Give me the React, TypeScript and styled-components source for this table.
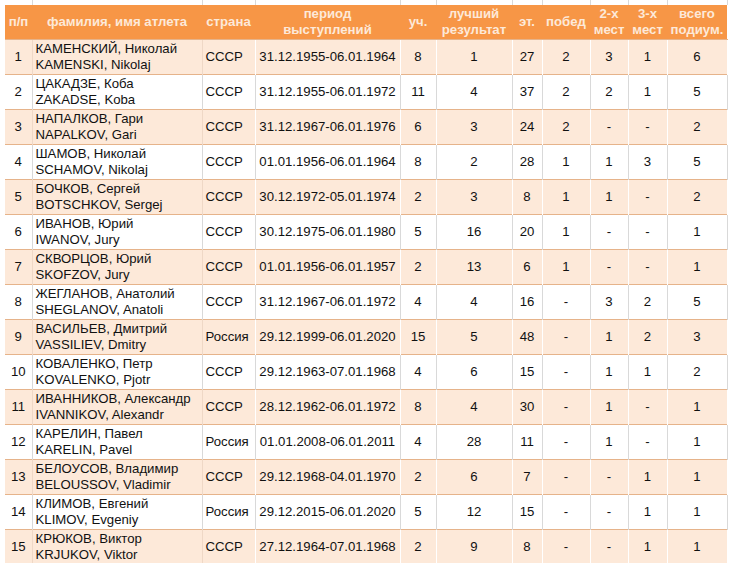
import styled, { createGlobalStyle } from 'styled-components';

const GlobalStyle = createGlobalStyle`
    html, body {
        margin: 0;
        padding: 0;
        background: #ffffff;
    }
    body {
        font-family: 'Liberation Sans', Arial, sans-serif;
    }
`;

const HEADER_COLOR = '#F79646';
const HEADER_TEXT = '#FDE9D9';
const PEACH = '#FDE9D9';
const ROW_LINE = '#E6B38A';
const GRID = '#D9D9D9';

const Page = styled.div`
    width: 730px;
    height: 563px;
    overflow: hidden;
    padding-left: 5px;
    box-sizing: border-box;
    border-left: 1px solid ${GRID};
    margin-left: -1px;
`;

const Table = styled.table`
    border-collapse: collapse;
    table-layout: fixed;
    width: 722px;
    font-size: 13.2px;
    color: #111111;
`;

const Strip = styled.tr`
    height: 5px;
    & td {
        padding: 0;
        border-right: 1px solid ${GRID};
        background: #ffffff;
    }
`;

const HeadRow = styled.tr`
    height: 34px;
    background: ${HEADER_COLOR};
`;

const Th = styled.th`
    color: ${HEADER_TEXT};
    font-weight: bold;
    line-height: 16px;
    padding: 0 1px;
    text-align: center;
    white-space: nowrap;
    border-bottom: 1px solid ${ROW_LINE};
`;

const Row = styled.tr<{ $shade: boolean }>`
    height: 35px;
    background: ${(p) => (p.$shade ? PEACH : '#ffffff')};
    border-bottom: 1px solid ${ROW_LINE};
    & td {
        border-right: 1px solid ${(p) => (p.$shade ? 'transparent' : GRID)};
    }
    & td:nth-child(1),
    & td:nth-child(2) {
        border-right-color: ${(p) => (p.$shade ? '#EFD8C6' : GRID)};
    }
`;

const Cell = styled.td<{ $align?: 'left' | 'center' }>`
    padding: 0 3px;
    text-align: ${(p) => p.$align ?? 'center'};
    line-height: 16px;
    white-space: nowrap;
    overflow: hidden;
    vertical-align: middle;
`;

const widths = [27, 170, 53, 145, 36, 76, 30, 48, 38, 39, 60];

const headers: string[][] = [
    ['п/п'],
    ['фамилия, имя атлета'],
    ['страна'],
    ['период', 'выступлений'],
    ['уч.'],
    ['лучший', 'результат'],
    ['эт.'],
    ['побед'],
    ['2-х', 'мест'],
    ['3-х', 'мест'],
    ['всего', 'подиум.'],
];

type Athlete = [string, string, string, string, string, string, string, string, string, string, string];

const athletes: Athlete[] = [
    ['КАМЕНСКИЙ, Николай', 'KAMENSKI, Nikolaj', 'СССР', '31.12.1955-06.01.1964', '8', '1', '27', '2', '3', '1', '6'],
    ['ЦАКАДЗЕ, Коба', 'ZAKADSE, Koba', 'СССР', '31.12.1955-06.01.1972', '11', '4', '37', '2', '2', '1', '5'],
    ['НАПАЛКОВ, Гари', 'NAPALKOV, Gari', 'СССР', '31.12.1967-06.01.1976', '6', '3', '24', '2', '-', '-', '2'],
    ['ШАМОВ, Николай', 'SCHAMOV, Nikolaj', 'СССР', '01.01.1956-06.01.1964', '8', '2', '28', '1', '1', '3', '5'],
    ['БОЧКОВ, Сергей', 'BOTSCHKOV, Sergej', 'СССР', '30.12.1972-05.01.1974', '2', '3', '8', '1', '1', '-', '2'],
    ['ИВАНОВ, Юрий', 'IWANOV, Jury', 'СССР', '30.12.1975-06.01.1980', '5', '16', '20', '1', '-', '-', '1'],
    ['СКВОРЦОВ, Юрий', 'SKOFZOV, Jury', 'СССР', '01.01.1956-06.01.1957', '2', '13', '6', '1', '-', '-', '1'],
    ['ЖЕГЛАНОВ, Анатолий', 'SHEGLANOV, Anatoli', 'СССР', '31.12.1967-06.01.1972', '4', '4', '16', '-', '3', '2', '5'],
    ['ВАСИЛЬЕВ, Дмитрий', 'VASSILIEV, Dmitry', 'Россия', '29.12.1999-06.01.2020', '15', '5', '48', '-', '1', '2', '3'],
    ['КОВАЛЕНКО, Петр', 'KOVALENKO, Pjotr', 'СССР', '29.12.1963-07.01.1968', '4', '6', '15', '-', '1', '1', '2'],
    ['ИВАННИКОВ, Александр', 'IVANNIKOV, Alexandr', 'СССР', '28.12.1962-06.01.1972', '8', '4', '30', '-', '1', '-', '1'],
    ['КАРЕЛИН, Павел', 'KARELIN, Pavel', 'Россия', '01.01.2008-06.01.2011', '4', '28', '11', '-', '1', '-', '1'],
    ['БЕЛОУСОВ, Владимир', 'BELOUSSOV, Vladimir', 'СССР', '29.12.1968-04.01.1970', '2', '6', '7', '-', '-', '1', '1'],
    ['КЛИМОВ, Евгений', 'KLIMOV, Evgeniy', 'Россия', '29.12.2015-06.01.2020', '5', '12', '15', '-', '-', '1', '1'],
    ['КРЮКОВ, Виктор', 'KRJUKOV, Viktor', 'СССР', '27.12.1964-07.01.1968', '2', '9', '8', '-', '-', '1', '1'],
];

export default function App() {
    return (
        <>
            <GlobalStyle />
            <Page>
                <Table>
                    <colgroup>
                        {widths.map((w, i) => (
                            <col key={i} style={{ width: w }} />
                        ))}
                    </colgroup>
                    <tbody>
                        <Strip>
                            {widths.map((_, i) => (
                                <td key={i} />
                            ))}
                        </Strip>
                        <HeadRow>
                            {headers.map((h, i) => (
                                <Th key={i}>
                                    {h.map((line, j) => (
                                        <div key={j}>{line}</div>
                                    ))}
                                </Th>
                            ))}
                        </HeadRow>
                        {athletes.map((a, i) => {
                            const [ru, lat, country, period, ...nums] = a;
                            return (
                                <Row key={i} $shade={i % 2 === 0}>
                                    <Cell>{i + 1}</Cell>
                                    <Cell $align="left">
                                        <div>{ru}</div>
                                        <div>{lat}</div>
                                    </Cell>
                                    <Cell $align="left">{country}</Cell>
                                    <Cell>{period}</Cell>
                                    {nums.map((n, j) => (
                                        <Cell key={j}>{n}</Cell>
                                    ))}
                                </Row>
                            );
                        })}
                    </tbody>
                </Table>
            </Page>
        </>
    );
}
